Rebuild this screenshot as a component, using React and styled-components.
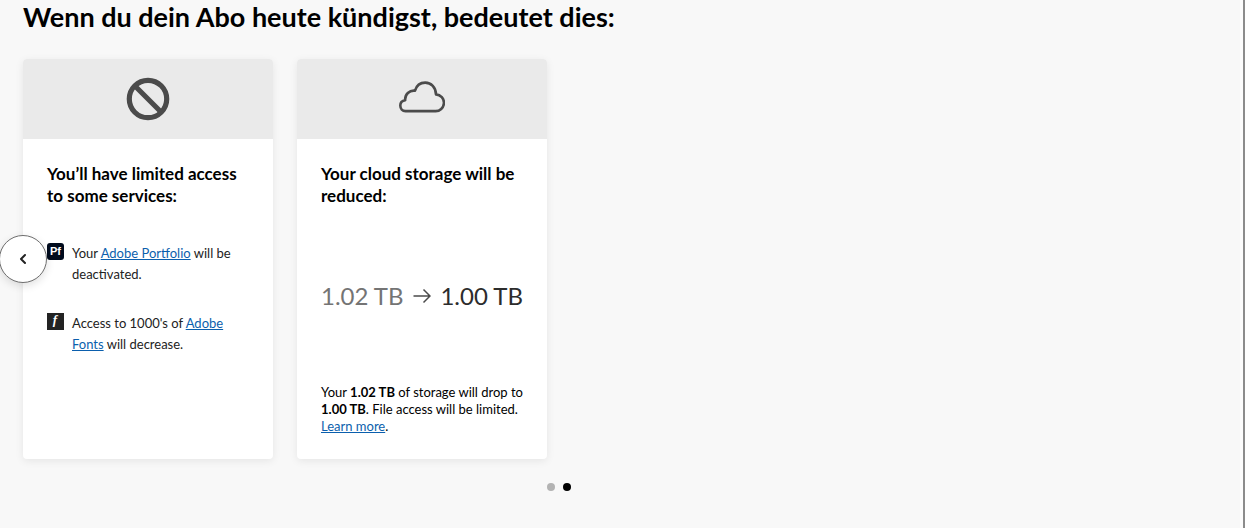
import React from 'react'
import styled, { createGlobalStyle } from 'styled-components'

const GlobalStyle = createGlobalStyle`
  *, *::before, *::after {
    box-sizing: border-box;
  }

  body {
    margin: 0;
    background-color: #f8f8f8;
    color: #000;
    font-family: Lato, 'Open Sans', sans-serif;
  }
`

const Page = styled.main`
  min-height: 100vh;
  padding: 0 23px 36px;
  border-right: 2px solid #8c8c8c;
  box-shadow: inset -3px 0 0 #fcfcfc;
`

const Title = styled.h1`
  margin: 0;
  padding-bottom: 25px;
  font-size: 27px;
  font-weight: 700;
  line-height: 34px;
`

const Carousel = styled.section`
  position: relative;
  max-width: 1072px;
`

const Cards = styled.div`
  display: flex;
  gap: 24px;
`

const Card = styled.article`
  display: flex;
  flex-direction: column;
  width: 250px;
  min-height: 400px;
  border-radius: 4px;
  background-color: #fff;
  box-shadow: 0 2px 8px rgba(0, 0, 0, 0.08);
  overflow: hidden;
`

const CardHeader = styled.div`
  display: flex;
  align-items: center;
  justify-content: center;
  height: 80px;
  background-color: #eaeaea;
  color: #4b4b4b;
`

const CardBody = styled.div`
  display: flex;
  flex: 1;
  flex-direction: column;
  padding: 24px;
`

const CardTitle = styled.h2`
  margin: 0;
  font-size: 17px;
  font-weight: 700;
  line-height: 22px;
`

const Link = styled.a`
  color: #0b5fad;
  text-decoration: underline;
  text-underline-offset: 1px;
`

const ServiceList = styled.ul`
  display: flex;
  flex-direction: column;
  gap: 28px;
  margin: 36px 0 0;
  padding: 0;
  list-style: none;
`

const Service = styled.li`
  display: flex;
  align-items: flex-start;
  gap: 8px;
  color: #222;
  font-size: 13px;
  line-height: 21px;

  svg {
    flex: none;
  }
`

const Storage = styled.div`
  display: flex;
  flex: 1;
  align-items: center;
  justify-content: space-between;
  white-space: nowrap;
`

const Amount = styled.span`
  color: ${({ $muted }) => $muted ? '#747474' : '#2c2c2c'};
  font-size: 24px;
  font-weight: 400;
  line-height: 32px;
`

const Note = styled.p`
  margin: 0;
  font-size: 13px;
  line-height: 17px;
`

const PrevButton = styled.button`
  position: absolute;
  top: 50%;
  left: 0;
  display: flex;
  align-items: center;
  justify-content: center;
  width: 48px;
  height: 48px;
  padding: 0;
  border: 1px solid #6e6e6e;
  border-radius: 50%;
  background-color: #fff;
  color: #222;
  box-shadow: 0 3px 8px rgba(0, 0, 0, 0.12);
  transform: translate(-50%, -50%);
  cursor: pointer;
`

const Dots = styled.nav`
  display: flex;
  justify-content: center;
  gap: 8px;
  max-width: 1072px;
  padding-top: 24px;
`

const Dot = styled.button`
  width: 8px;
  height: 8px;
  padding: 0;
  border: 0;
  border-radius: 50%;
  background-color: ${({ $active }) => $active ? '#000' : '#b3b3b3'};
  cursor: pointer;
`

const BlockedIcon = () => (
  <svg width="44" height="44" viewBox="0 0 44 44" fill="none" stroke="currentColor" strokeWidth="5.2" aria-hidden="true">
    <circle cx="22" cy="22" r="18.7" />
    <path d="M9 9 35 35" />
  </svg>
)

const CloudIcon = () => (
  <svg width="46" height="38" viewBox="0 0 46 38" fill="none" stroke="currentColor" strokeWidth="2.6" strokeLinejoin="round" aria-hidden="true">
    <path d="M6.5 31.1H36.2A8.3 8.3 0 0 0 37 14.4C36.9 7.3 32.1 2.6 26.2 2.6C21.2 2.6 17.4 5.8 16 10.7C10.5 10 5.7 14.4 6.2 20.2C3.2 20.6 1.3 22.8 1.3 25.6C1.3 28.7 3.5 31.1 6.5 31.1Z" />
  </svg>
)

const PortfolioIcon = () => (
  <svg width="17" height="17" viewBox="0 0 17 17" aria-hidden="true">
    <rect width="17" height="17" rx="3" fill="#000b1d" />
    <text x="8.5" y="12" textAnchor="middle" fill="#fff" fontFamily="Liberation Sans, sans-serif" fontSize="11" fontWeight="700">Pf</text>
  </svg>
)

const FontsIcon = () => (
  <svg width="17" height="17" viewBox="0 0 17 17" aria-hidden="true">
    <rect width="17" height="17" fill="#232323" />
    <text x="8" y="11" textAnchor="middle" fill="#fff" fontFamily="Liberation Serif, serif" fontSize="13" fontStyle="italic" fontWeight="700">f</text>
  </svg>
)

const ArrowIcon = () => (
  <svg width="18" height="16" viewBox="0 0 18 16" fill="none" stroke="#4b4b4b" strokeWidth="1.5" aria-hidden="true">
    <path d="M0.5 8H16.5M10.5 1.5 17 8 10.5 14.5" />
  </svg>
)

const ChevronIcon = () => (
  <svg width="8" height="12" viewBox="0 0 8 12" fill="none" stroke="currentColor" strokeWidth="2" strokeLinecap="round" strokeLinejoin="round" aria-hidden="true">
    <path d="M6 2 2 6 6 10" />
  </svg>
)

const App = () => (
  <>
    <GlobalStyle />
    <Page>
      <Title>Wenn du dein Abo heute kündigst, bedeutet dies:</Title>
      <Carousel>
        <Cards>
          <Card>
            <CardHeader><BlockedIcon /></CardHeader>
            <CardBody>
              <CardTitle>You’ll have limited access to some services:</CardTitle>
              <ServiceList>
                <Service>
                  <PortfolioIcon />
                  <span>Your <Link href="#portfolio">Adobe Portfolio</Link> will be deactivated.</span>
                </Service>
                <Service>
                  <FontsIcon />
                  <span>Access to 1000's of <Link href="#fonts">Adobe Fonts</Link> will decrease.</span>
                </Service>
              </ServiceList>
            </CardBody>
          </Card>
          <Card>
            <CardHeader><CloudIcon /></CardHeader>
            <CardBody>
              <CardTitle>Your cloud storage will be reduced:</CardTitle>
              <Storage>
                <Amount $muted>1.02 TB</Amount>
                <ArrowIcon />
                <Amount>1.00 TB</Amount>
              </Storage>
              <Note>
                Your <b>1.02 TB</b> of storage will drop to <b>1.00 TB</b>. File access will be limited.{' '}
                <Link href="#storage">Learn more</Link>.
              </Note>
            </CardBody>
          </Card>
        </Cards>
        <PrevButton type="button" aria-label="Previous"><ChevronIcon /></PrevButton>
      </Carousel>
      <Dots aria-label="Slides">
        <Dot type="button" aria-label="Slide 1" />
        <Dot type="button" aria-label="Slide 2" aria-current="true" $active />
      </Dots>
    </Page>
  </>
)

export default App
